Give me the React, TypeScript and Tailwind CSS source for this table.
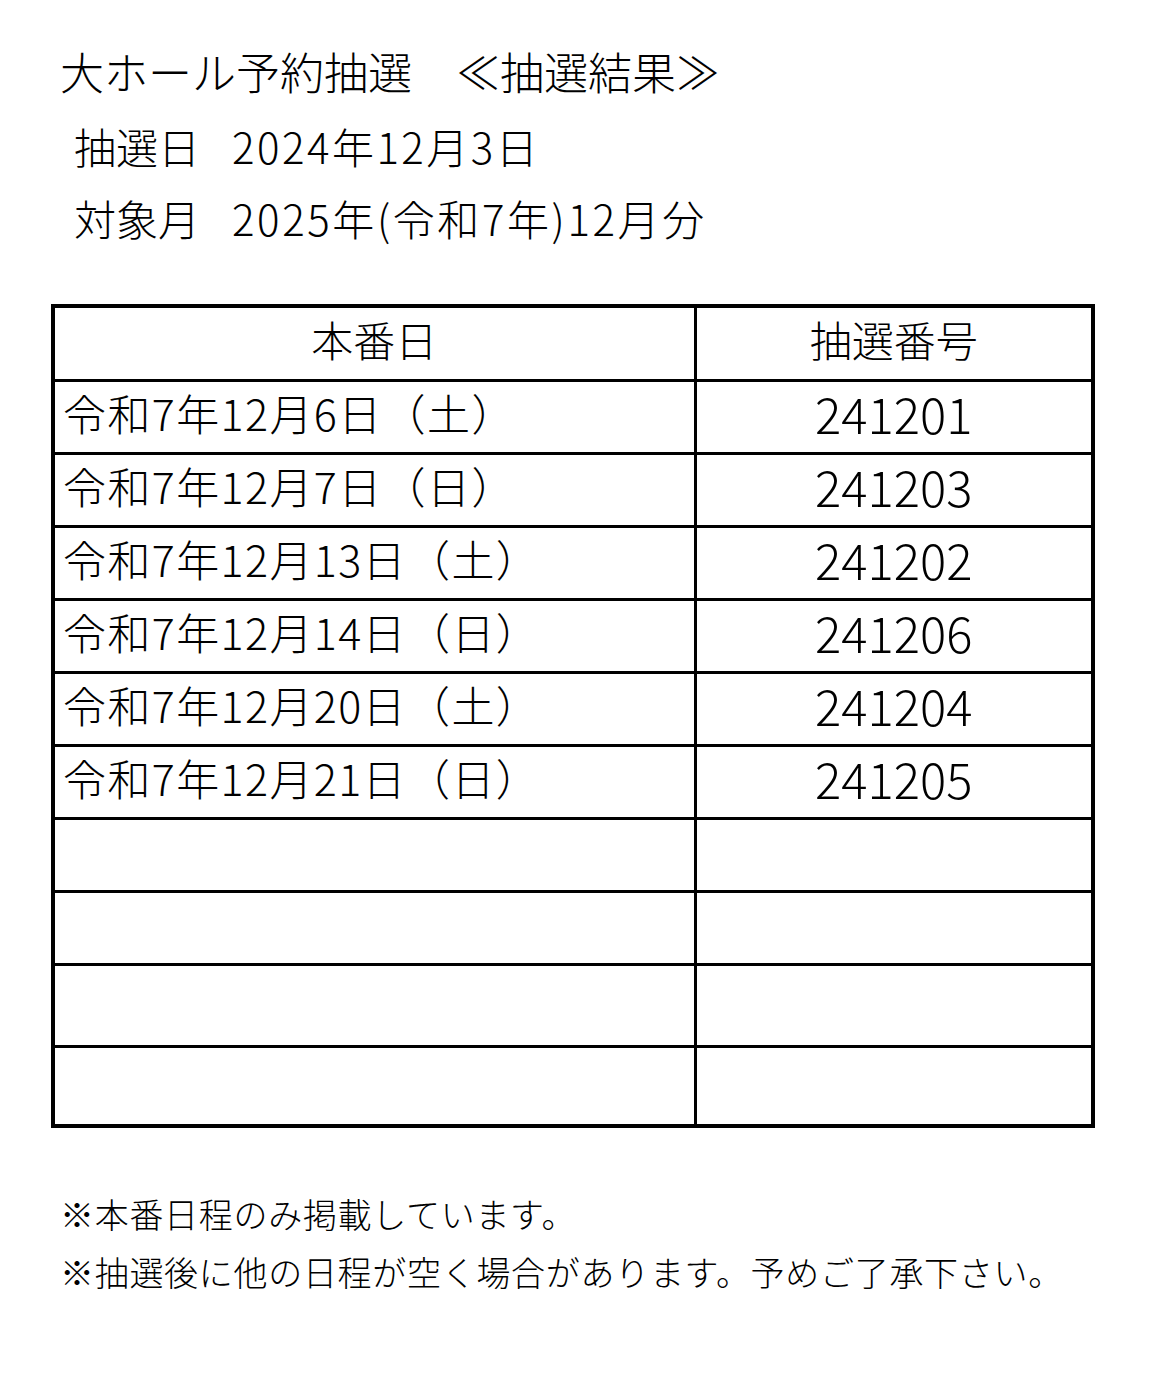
import React from 'react';

const rows: { date: string; no: string }[] = [
  { date: '令和7年12月6日（土）', no: '241201' },
  { date: '令和7年12月7日（日）', no: '241203' },
  { date: '令和7年12月13日（土）', no: '241202' },
  { date: '令和7年12月14日（日）', no: '241206' },
  { date: '令和7年12月20日（土）', no: '241204' },
  { date: '令和7年12月21日（日）', no: '241205' },
  { date: '', no: '' },
  { date: '', no: '' },
];

export default function App() {
  return (
    <div
      className="w-[1150px] h-[1381px] bg-white text-black font-light"
      style={{ fontFamily: '"Noto Sans CJK JP", "Noto Sans", sans-serif' }}
    >
      {/* 見出し */}
      <div className="pt-[46px] pl-[60px] text-[44px] leading-[50px] whitespace-pre">
        大ホール予約抽選　≪抽選結果≫
      </div>
      <div className="mt-[22px] pl-[74px] text-[42px] leading-[56px] whitespace-nowrap">
        <span>抽選日</span>
        <span className="ml-[32px] tracking-[2.5px]">2024年12月3日</span>
      </div>
      <div className="mt-[16px] pl-[74px] text-[42px] leading-[56px] whitespace-nowrap">
        <span>対象月</span>
        <span className="ml-[32px] tracking-[2.6px]">2025年(令和7年)12月分</span>
      </div>

      {/* 抽選結果テーブル */}
      <table className="mt-[58px] ml-[51px] w-[1044px] border-collapse border-[4px] border-black">
        <thead>
          <tr className="h-[74px]">
            <th className="w-[642px] border-[3px] border-black font-light text-[42px] leading-none text-center pb-[8px]">本番日</th>
            <th className="border-[3px] border-black font-light text-[42px] leading-none text-center pb-[8px]">抽選番号</th>
          </tr>
        </thead>
        <tbody>
          {rows.map((r, i) => (
            <tr key={i} className="h-[73px]">
              <td className="border-[3px] border-black pl-[8px] pb-[8px] text-[43px] tracking-[1.4px] leading-none whitespace-nowrap">{r.date}</td>
              <td className="border-[3px] border-black pb-[8px] text-center text-[49px] leading-none">{r.no}</td>
            </tr>
          ))}
          <tr className="h-[82px]">
            <td className="border-[3px] border-black"></td>
            <td className="border-[3px] border-black"></td>
          </tr>
          <tr className="h-[80px]">
            <td className="border-[3px] border-black"></td>
            <td className="border-[3px] border-black"></td>
          </tr>
        </tbody>
      </table>

      {/* 注意書き */}
      <div className="mt-[66px] pl-[60px] text-[34px] tracking-[0.7px] leading-[40px] whitespace-nowrap">※本番日程のみ掲載しています。</div>
      <div className="mt-[18px] pl-[60px] text-[34px] tracking-[0.7px] leading-[40px] whitespace-nowrap">
        ※抽選後に他の日程が空く場合があります。予めご了承下さい。
      </div>
    </div>
  );
}
